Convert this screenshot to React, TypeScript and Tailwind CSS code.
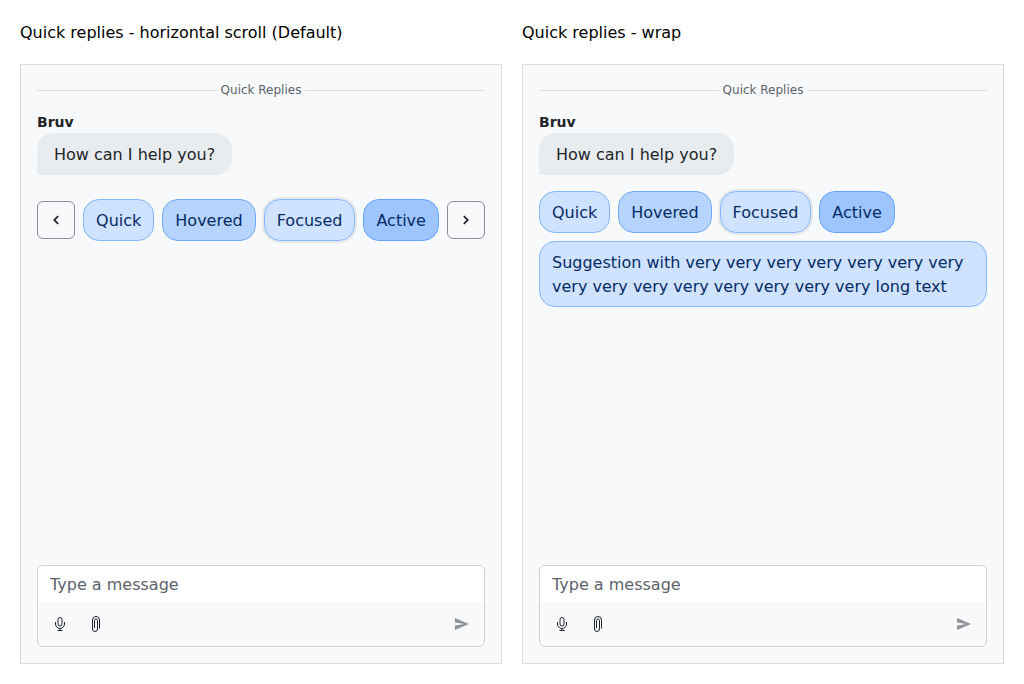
import type { ReactNode } from "react";

type ReplyState = "normal" | "hovered" | "focused" | "active";

const replyStyles: Record<ReplyState, string> = {
  normal: "border-[#86b7fe] bg-[#cfe2ff]",
  hovered: "border-[#6ea8fe] bg-[#b6d4fe]",
  focused: "border-[#86b7fe] bg-[#cfe2ff] ring-2 ring-[#e7e9eb]",
  active: "border-[#66a3fe] bg-[#9ec5fe]",
};

function Reply({ state = "normal", children }: { state?: ReplyState; children: ReactNode }) {
  return (
    <button
      type="button"
      className={`rounded-2xl border px-3 pt-[9px] pb-[7px] text-left text-base text-[#052c65] ${replyStyles[state]}`}
    >
      {children}
    </button>
  );
}

function Replies() {
  return (
    <>
      <Reply>Quick</Reply>
      <Reply state="hovered">Hovered</Reply>
      <Reply state="focused">Focused</Reply>
      <Reply state="active">Active</Reply>
    </>
  );
}

function Icon({ d }: { d: string }) {
  return (
    <svg viewBox="0 0 512 512" className="size-4" fill="currentColor" aria-hidden="true">
      <path d={d} />
    </svg>
  );
}

function ScrollButton({ label, d }: { label: string; d: string }) {
  return (
    <button
      type="button"
      aria-label={label}
      className="flex size-[38px] shrink-0 items-center justify-center rounded-md border border-[#8b8d9b] text-[#212529]"
    >
      <Icon d={d} />
    </button>
  );
}

function MicIcon() {
  return (
    <svg viewBox="0 0 16 16" className="size-4" fill="none" stroke="currentColor" aria-hidden="true">
      <rect x="6" y="1.5" width="4" height="8.5" rx="2" />
      <path d="M3.5 6v2a4.5 4.5 0 0 0 9 0V6M8 12.5v2M5.5 14.5h5" />
    </svg>
  );
}

function ClipIcon() {
  return (
    <svg viewBox="0 0 16 16" className="size-4" fill="none" stroke="currentColor" aria-hidden="true">
      <path d="M11.5 12.5V4a3.5 3.5 0 0 0-7 0v9a2.5 2.5 0 0 0 5 0V4.5a1.5 1.5 0 0 0-3 0V12" />
    </svg>
  );
}

function MessageBox() {
  const tool = "flex size-9 items-center justify-center rounded";
  return (
    <form
      className="overflow-hidden rounded-md border border-[#ced2d6]"
      onSubmit={(e) => e.preventDefault()}
    >
      <input
        type="text"
        aria-label="Message"
        placeholder="Type a message"
        className="block h-9 w-full bg-white px-3 text-base text-[#212529] outline-none placeholder:text-[#5c636a]"
      />
      <div className="flex items-center p-1 text-[#212529]">
        <button type="button" aria-label="Record voice" className={tool}>
          <MicIcon />
        </button>
        <button type="button" aria-label="Attach file" className={tool}>
          <ClipIcon />
        </button>
        <button type="submit" aria-label="Send" className={`${tool} ml-auto text-[#909396]`}>
          <Icon d="M32 64v144l288 48-288 48v144l448-192z" />
        </button>
      </div>
    </form>
  );
}

function Chat({ title, children }: { title: string; children: ReactNode }) {
  return (
    <section className="flex min-w-0 flex-col gap-[18px]">
      <h2 className="text-base leading-[26px] text-black">{title}</h2>
      <div className="flex min-h-[600px] flex-col border border-[#dadcdf] bg-[#f8f9fb] p-4 text-[#212529]">
        <div className="flex items-center gap-1 text-xs leading-[18px] text-[#5c636a]">
          <span className="h-px flex-1 bg-[#dadcdf]" />
          Quick Replies
          <span className="h-px flex-1 bg-[#dadcdf]" />
        </div>
        <div className="mt-4 flex flex-col items-start gap-1">
          <p className="text-sm leading-[14px] font-bold">Bruv</p>
          <p className="rounded-2xl rounded-bl-[2px] border border-[#e9ecef] bg-[#e9ecef] px-4 pt-[9px] pb-[7px] text-base">
            How can I help you?
          </p>
        </div>
        <div className="mt-4">{children}</div>
        <div className="mt-auto">
          <MessageBox />
        </div>
      </div>
    </section>
  );
}

export default function App() {
  return (
    <main className="grid grid-cols-2 gap-5 bg-white p-5 font-['DejaVu_Sans',sans-serif]">
      <Chat title="Quick replies - horizontal scroll (Default)">
        <div className="flex items-center justify-between gap-2 py-2">
          <ScrollButton
            label="Previous replies"
            d="M160 256 306 110 346 150 240 256 346 362 306 402z"
          />
          <Replies />
          <ScrollButton
            label="Next replies"
            d="M352 256 206 110 166 150 272 256 166 362 206 402z"
          />
        </div>
      </Chat>
      <Chat title="Quick replies - wrap">
        <div className="flex flex-wrap gap-2">
          <Replies />
          <Reply>
            Suggestion with very very very very very very very very very very very very very very
            very long text
          </Reply>
        </div>
      </Chat>
    </main>
  );
}
